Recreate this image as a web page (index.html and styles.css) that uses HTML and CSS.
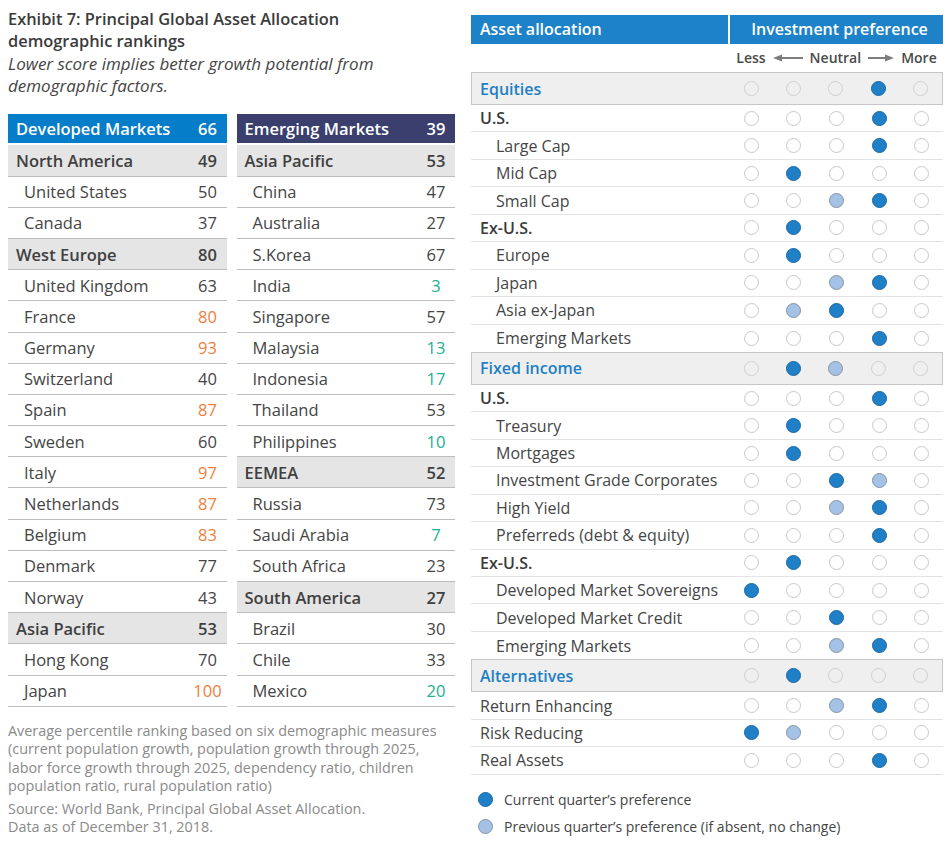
FILE: index.html
```html
<!DOCTYPE html>
<html lang="en">
<head>
<meta charset="utf-8">
<title>Principal Global Asset Allocation</title>
<link rel="stylesheet" href="styles.css">
</head>
<body>
<div class="page">
  <section class="left">
    <h1 class="title">Exhibit 7: Principal Global Asset Allocation<br>demographic rankings</h1>
    <p class="subtitle">Lower score implies better growth potential from<br>demographic factors.</p>
    <div class="rank-tables">
      <div class="rank-col">
        <div class="rrow head dev"><span class="name">Developed Markets</span><span class="num">66</span></div>
        <div class="rrow grp"><span class="name">North America</span><span class="num">49</span></div>
        <div class="rrow"><span class="name">United States</span><span class="num">50</span></div>
        <div class="rrow"><span class="name">Canada</span><span class="num">37</span></div>
        <div class="rrow grp"><span class="name">West Europe</span><span class="num">80</span></div>
        <div class="rrow"><span class="name">United Kingdom</span><span class="num">63</span></div>
        <div class="rrow"><span class="name">France</span><span class="num orange">80</span></div>
        <div class="rrow"><span class="name">Germany</span><span class="num orange">93</span></div>
        <div class="rrow"><span class="name">Switzerland</span><span class="num">40</span></div>
        <div class="rrow"><span class="name">Spain</span><span class="num orange">87</span></div>
        <div class="rrow"><span class="name">Sweden</span><span class="num">60</span></div>
        <div class="rrow"><span class="name">Italy</span><span class="num orange">97</span></div>
        <div class="rrow"><span class="name">Netherlands</span><span class="num orange">87</span></div>
        <div class="rrow"><span class="name">Belgium</span><span class="num orange">83</span></div>
        <div class="rrow"><span class="name">Denmark</span><span class="num">77</span></div>
        <div class="rrow"><span class="name">Norway</span><span class="num">43</span></div>
        <div class="rrow grp"><span class="name">Asia Pacific</span><span class="num">53</span></div>
        <div class="rrow"><span class="name">Hong Kong</span><span class="num">70</span></div>
        <div class="rrow"><span class="name">Japan</span><span class="num orange">100</span></div>
      </div>
      <div class="rank-col">
        <div class="rrow head em"><span class="name">Emerging Markets</span><span class="num">39</span></div>
        <div class="rrow grp"><span class="name">Asia Pacific</span><span class="num">53</span></div>
        <div class="rrow"><span class="name">China</span><span class="num">47</span></div>
        <div class="rrow"><span class="name">Australia</span><span class="num">27</span></div>
        <div class="rrow"><span class="name">S.Korea</span><span class="num">67</span></div>
        <div class="rrow"><span class="name">India</span><span class="num green">3</span></div>
        <div class="rrow"><span class="name">Singapore</span><span class="num">57</span></div>
        <div class="rrow"><span class="name">Malaysia</span><span class="num green">13</span></div>
        <div class="rrow"><span class="name">Indonesia</span><span class="num green">17</span></div>
        <div class="rrow"><span class="name">Thailand</span><span class="num">53</span></div>
        <div class="rrow"><span class="name">Philippines</span><span class="num green">10</span></div>
        <div class="rrow grp"><span class="name">EEMEA</span><span class="num">52</span></div>
        <div class="rrow"><span class="name">Russia</span><span class="num">73</span></div>
        <div class="rrow"><span class="name">Saudi Arabia</span><span class="num green">7</span></div>
        <div class="rrow"><span class="name">South Africa</span><span class="num">23</span></div>
        <div class="rrow grp"><span class="name">South America</span><span class="num">27</span></div>
        <div class="rrow"><span class="name">Brazil</span><span class="num">30</span></div>
        <div class="rrow"><span class="name">Chile</span><span class="num">33</span></div>
        <div class="rrow"><span class="name">Mexico</span><span class="num green">20</span></div>
      </div>
    </div>
    <p class="note">Average percentile ranking based on six demographic measures<br>(current population growth, population growth through 2025,<br>labor force growth through 2025, dependency ratio, children<br>population ratio, rural population ratio)</p>
    <p class="note src">Source: World Bank, Principal Global Asset Allocation.<br>Data as of December 31, 2018.</p>
  </section>

  <section class="right">
    <div class="aa-head">
      <div class="aa-h1">Asset allocation</div>
      <div class="aa-h2">Investment preference</div>
    </div>
    <div class="scale">
      <div class="scale-in">
        <span>Less</span>
        <svg class="arrow" width="30" height="10" viewBox="0 0 30 10"><path d="M0 5 L9 1.5 L9 8.5 Z" fill="#7d7d7d"/><rect x="8" y="4" width="22" height="2" fill="#7d7d7d"/></svg>
        <span>Neutral</span>
        <svg class="arrow" width="26" height="10" viewBox="0 0 26 10"><rect x="0" y="4" width="18" height="2" fill="#7d7d7d"/><path d="M26 5 L17 1.5 L17 8.5 Z" fill="#7d7d7d"/></svg>
        <span>More</span>
      </div>
    </div>

    <div class="arow grp"><span class="lbl">Equities</span><span class="dots"><i class="dot"></i><i class="dot"></i><i class="dot"></i><i class="dot cur"></i><i class="dot"></i></span></div>
    <div class="arow bold"><span class="lbl">U.S.</span><span class="dots"><i class="dot"></i><i class="dot"></i><i class="dot"></i><i class="dot cur"></i><i class="dot"></i></span></div>
    <div class="arow l2"><span class="lbl">Large Cap</span><span class="dots"><i class="dot"></i><i class="dot"></i><i class="dot"></i><i class="dot cur"></i><i class="dot"></i></span></div>
    <div class="arow l2"><span class="lbl">Mid Cap</span><span class="dots"><i class="dot"></i><i class="dot cur"></i><i class="dot"></i><i class="dot"></i><i class="dot"></i></span></div>
    <div class="arow l2"><span class="lbl">Small Cap</span><span class="dots"><i class="dot"></i><i class="dot"></i><i class="dot prev"></i><i class="dot cur"></i><i class="dot"></i></span></div>
    <div class="arow bold"><span class="lbl">Ex-U.S.</span><span class="dots"><i class="dot"></i><i class="dot cur"></i><i class="dot"></i><i class="dot"></i><i class="dot"></i></span></div>
    <div class="arow l2"><span class="lbl">Europe</span><span class="dots"><i class="dot"></i><i class="dot cur"></i><i class="dot"></i><i class="dot"></i><i class="dot"></i></span></div>
    <div class="arow l2"><span class="lbl">Japan</span><span class="dots"><i class="dot"></i><i class="dot"></i><i class="dot prev"></i><i class="dot cur"></i><i class="dot"></i></span></div>
    <div class="arow l2"><span class="lbl">Asia ex-Japan</span><span class="dots"><i class="dot"></i><i class="dot prev"></i><i class="dot cur"></i><i class="dot"></i><i class="dot"></i></span></div>
    <div class="arow l2 pre"><span class="lbl">Emerging Markets</span><span class="dots"><i class="dot"></i><i class="dot"></i><i class="dot"></i><i class="dot cur"></i><i class="dot"></i></span></div>

    <div class="arow grp"><span class="lbl">Fixed income</span><span class="dots"><i class="dot"></i><i class="dot cur"></i><i class="dot prev"></i><i class="dot"></i><i class="dot"></i></span></div>
    <div class="arow bold"><span class="lbl">U.S.</span><span class="dots"><i class="dot"></i><i class="dot"></i><i class="dot"></i><i class="dot cur"></i><i class="dot"></i></span></div>
    <div class="arow l2"><span class="lbl">Treasury</span><span class="dots"><i class="dot"></i><i class="dot cur"></i><i class="dot"></i><i class="dot"></i><i class="dot"></i></span></div>
    <div class="arow l2"><span class="lbl">Mortgages</span><span class="dots"><i class="dot"></i><i class="dot cur"></i><i class="dot"></i><i class="dot"></i><i class="dot"></i></span></div>
    <div class="arow l2"><span class="lbl">Investment Grade Corporates</span><span class="dots"><i class="dot"></i><i class="dot"></i><i class="dot cur"></i><i class="dot prev"></i><i class="dot"></i></span></div>
    <div class="arow l2"><span class="lbl">High Yield</span><span class="dots"><i class="dot"></i><i class="dot"></i><i class="dot prev"></i><i class="dot cur"></i><i class="dot"></i></span></div>
    <div class="arow l2"><span class="lbl">Preferreds (debt &amp; equity)</span><span class="dots"><i class="dot"></i><i class="dot"></i><i class="dot"></i><i class="dot cur"></i><i class="dot"></i></span></div>
    <div class="arow bold"><span class="lbl">Ex-U.S.</span><span class="dots"><i class="dot"></i><i class="dot cur"></i><i class="dot"></i><i class="dot"></i><i class="dot"></i></span></div>
    <div class="arow l2"><span class="lbl">Developed Market Sovereigns</span><span class="dots"><i class="dot cur"></i><i class="dot"></i><i class="dot"></i><i class="dot"></i><i class="dot"></i></span></div>
    <div class="arow l2"><span class="lbl">Developed Market Credit</span><span class="dots"><i class="dot"></i><i class="dot"></i><i class="dot cur"></i><i class="dot"></i><i class="dot"></i></span></div>
    <div class="arow l2 pre"><span class="lbl">Emerging Markets</span><span class="dots"><i class="dot"></i><i class="dot"></i><i class="dot prev"></i><i class="dot cur"></i><i class="dot"></i></span></div>

    <div class="arow grp"><span class="lbl">Alternatives</span><span class="dots"><i class="dot"></i><i class="dot cur"></i><i class="dot"></i><i class="dot"></i><i class="dot"></i></span></div>
    <div class="arow"><span class="lbl">Return Enhancing</span><span class="dots"><i class="dot"></i><i class="dot"></i><i class="dot prev"></i><i class="dot cur"></i><i class="dot"></i></span></div>
    <div class="arow"><span class="lbl">Risk Reducing</span><span class="dots"><i class="dot cur"></i><i class="dot prev"></i><i class="dot"></i><i class="dot"></i><i class="dot"></i></span></div>
    <div class="arow"><span class="lbl">Real Assets</span><span class="dots"><i class="dot"></i><i class="dot"></i><i class="dot"></i><i class="dot cur"></i><i class="dot"></i></span></div>

    <div class="legend">
      <div class="legend-item"><i class="dot cur"></i><span>Current quarter’s preference</span></div>
      <div class="legend-item"><i class="dot prev"></i><span>Previous quarter’s preference (if absent, no change)</span></div>
    </div>
  </section>
</div>
</body>
</html>
```

FILE: styles.css
```css
* { box-sizing: border-box; }

body {
  margin: 0;
  background: #fff;
  color: #444;
  font-family: "Open Sans", "Noto Sans", "Liberation Sans", sans-serif;
}

.page {
  display: flex;
  gap: 16px;
  padding: 8px 6px 0 8px;
}

/* ---------- left ---------- */
.left { width: 447px; }

.title {
  margin: 0;
  font-size: 16.4px;
  line-height: 22.3px;
  font-weight: 600;
  color: #3b3b3b;
}

.subtitle {
  margin: 0;
  font-size: 17px;
  line-height: 22.3px;
  font-style: italic;
  color: #454545;
  white-space: nowrap;
}

.rank-tables {
  display: flex;
  gap: 10px;
  margin-top: 17px;
}

.rank-col { width: 219px; }

.rrow {
  display: flex;
  align-items: center;
  height: 31.2px;
  border-bottom: 1px solid #bdbdbd;
  font-size: 16.5px;
  color: #454545;
}

.rrow .name {
  flex: 1;
  padding-left: 16px;
  white-space: nowrap;
}

.rrow .num {
  width: 38px;
  text-align: center;
}

.rrow.head {
  color: #fff;
  font-weight: 600;
  border-bottom: 2px solid #fff;
}

.rrow.head .name,
.rrow.grp .name { padding-left: 8px; }

.rrow.dev { background: #067dc8; }
.rrow.em { background: #3a3f6e; }

.rrow.grp {
  background: #e5e5e6;
  font-weight: 600;
  color: #404040;
}

.num.orange { color: #f07e3c; }
.num.green { color: #25ad95; }

.note {
  margin: 15px 0 0;
  font-size: 14.4px;
  line-height: 18.5px;
  color: #8a8a8a;
  white-space: nowrap;
}

.note.src { margin-top: 4px; }

/* ---------- right ---------- */
.right {
  width: 472px;
  padding-top: 7px;
}

.aa-head {
  display: flex;
  gap: 2px;
  height: 28.5px;
}

.aa-h1,
.aa-h2 {
  display: flex;
  align-items: center;
  background: #1e82c8;
  color: #fff;
  font-size: 16px;
  font-weight: 600;
}

.aa-h1 {
  flex: 1;
  padding-left: 9px;
}

.aa-h2 {
  width: 213px;
  justify-content: center;
  padding-left: 6px;
}

.scale {
  display: flex;
  justify-content: flex-end;
  height: 28.5px;
}

.scale-in {
  width: 213px;
  display: flex;
  align-items: center;
  justify-content: center;
  gap: 7px;
  font-size: 14px;
  font-weight: 600;
  color: #4a4a4a;
}

.arrow { display: block; }

.arow {
  display: flex;
  align-items: center;
  height: 27.45px;
  border-bottom: 1px solid #e3e3e3;
  font-size: 16px;
  color: #454545;
}

.arow.pre { border-bottom: none; }

.arow .lbl {
  flex: 1;
  padding-left: 9px;
  white-space: nowrap;
}

.arow.l2 .lbl { padding-left: 25px; }

.arow.bold .lbl {
  font-weight: 600;
  color: #3a3a3a;
}

.arow.grp {
  height: 33px;
  border: 1px solid #c6c6c6;
  background: #efefef;
}

.arow.grp .lbl {
  padding-left: 8px;
  color: #1e7fc4;
  font-weight: 600;
}

.dots {
  width: 213px;
  display: grid;
  grid-template-columns: repeat(5, 1fr);
  justify-items: center;
  align-items: center;
}

.arow.grp .dots { width: 212px; }

.dot {
  display: block;
  width: 15px;
  height: 15px;
  border-radius: 50%;
  border: 1px solid #c8c8c8;
  background: #fff;
}

.arow.grp .dot {
  background: transparent;
  border-color: #cfcfcf;
}

.dot.cur,
.arow.grp .dot.cur {
  background: #1f80c7;
  border-color: #1a68a4;
}

.dot.prev,
.arow.grp .dot.prev {
  background: #a4c2e6;
  border-color: #8693a4;
}

.legend { margin-top: 11.5px; }

.legend-item {
  display: flex;
  align-items: center;
  gap: 11px;
  height: 26.7px;
  padding-left: 7px;
  font-size: 14px;
  color: #454545;
}
```
